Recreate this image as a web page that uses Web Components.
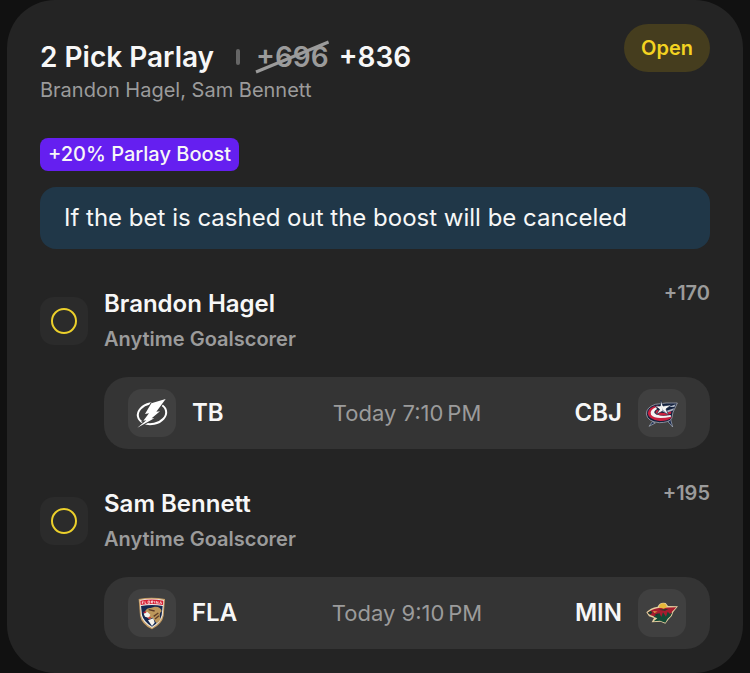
<!DOCTYPE html>
<html lang="en">
<head>
<meta charset="utf-8">
<meta name="viewport" content="width=device-width, initial-scale=1">
<title>2 Pick Parlay</title>
<style>
    body {
        margin: 0;
        background: #111;
        color: #f7f7f7;
        font-family: Inter, "Liberation Sans", sans-serif;
    }
</style>
</head>
<body>
<bet-card>
    <bet-header slot="header" was="+696" now="+836" status="Open">
        2 Pick Parlay
        <span slot="players">Brandon Hagel, Sam Bennett</span>
    </bet-header>
    <boost-badge slot="boost">+20% Parlay Boost</boost-badge>
    <bet-notice slot="boost">If the bet is cashed out the boost will be canceled</bet-notice>
    <bet-leg player="Brandon Hagel" market="Anytime Goalscorer" odds="+170">
        <game-bar away="TB" home="CBJ">Today 7:10&#8239;PM</game-bar>
    </bet-leg>
    <bet-leg player="Sam Bennett" market="Anytime Goalscorer" odds="+195">
        <game-bar away="FLA" home="MIN">Today 9:10&#8239;PM</game-bar>
    </bet-leg>
</bet-card>

<script>
const logos = {
    TB: `
        <ellipse cx="72" cy="74" rx="43" ry="31" transform="rotate(-12 72 74)" fill="none" stroke="#fff" stroke-width="6"/>
        <path d="M113 30 L70 43 L51 75 L63 73 L46 95 L55 94 L28 116 L79 88 L71 88 L96 67 L85 68 Z" fill="#fff" stroke="#404040" stroke-width="6" paint-order="stroke"/>`,
    CBJ: `
        <path d="M43 98 L33 112 L52 102 Z M90 98 L104 114 L98 91 Z" fill="#1c2c50" stroke="#a9b0bc" stroke-width="2"/>
        <path d="M118 42 Q84 40 52 46 Q25 55 25 75 Q28 98 64 101 Q91 101 101 89 L105 70 Z" fill="#14223f" stroke="#b9bdc7" stroke-width="2"/>
        <path d="M62 48 Q31 53 29 73 Q32 92 65 96 Q87 97 100 87 L99 80 Q70 88 50 80 Q39 72 50 63 Z" fill="#c9213f"/>
        <path d="M54 55 Q34 63 39 77 Q52 93 99 83 L98 78 Q63 84 50 73 Q46 67 57 60 Z" fill="#f3f3f3"/>
        <path d="M59 62 Q47 68 57 76 Q76 84 99 74 L100 67 Q76 76 65 69 Z" fill="#c9213f"/>
        <path d="M84 66 L108 58 L106 64 L84 72 Z M92 54 L113 46 L109 54 Z" fill="#aeb6c4"/>
        <path d="M69 33 L75 51 L101 47 L84 60 L91 77 L73 67 L55 76 L65 61 L51 51 L67 51 Z" fill="#f5f5f5" stroke="#14223f" stroke-width="2"/>
        <path d="M70 43 L73 61 L88 74 L73 66 Z" fill="#8795ad"/>`,
    FLA: `
        <path d="M32 30 Q70 22 111 30 L107 80 Q103 104 72 121 Q40 105 36 80 Z" fill="#c49c64"/>
        <path d="M35 33 Q71 25 108 33 L104 79 Q99 101 72 117 Q44 101 39 79 Z" fill="#f2eee5"/>
        <path d="M37 35 Q71 28 106 35 L105 48 Q72 42 38 48 Z" fill="#d51f34"/>
        <path d="M43 38 V45 M43 38 H47 M43 41 H46 M51 37 V44 H55 M60 36 H65 V43 H60 Z M70 43 V36 H75 V39 H70 L75 43 M80 36 V43 M85 44 V37 L90 44 V37 M95 45 L98 38 L101 45" fill="none" stroke="#fff" stroke-width="2"/>
        <path d="M39 51 Q72 45 104 51 L101 78 Q97 98 72 113 Q47 98 42 78 Z" fill="#142850"/>
        <path d="M52 65 Q57 55 68 57 L80 53 Q99 52 101 67 Q91 73 98 91 Q92 100 85 102 L74 86 L64 91 L50 78 Z" fill="#bd975b"/>
        <path d="M47 74 L58 69 L67 77 L62 86 L51 83 Z M60 94 L76 88 L80 101 L72 111 Z" fill="#f5f2eb"/>
        <path d="M62 62 L80 66 M77 82 L91 72 M81 90 L93 80" stroke="#5f3d2a" stroke-width="4"/>
        <path d="M44 70 L53 67 L54 73 Z M57 86 L69 84 L66 90 Z" fill="#d51f34"/>`,
    MIN: `
        <path d="M25 70 Q36 57 59 53 Q65 38 83 42 L90 51 L120 52 L106 69 Q104 81 92 91 L82 104 L68 98 L41 100 L48 87 L33 82 Z" fill="#e5cf9f"/>
        <path d="M29 71 Q42 59 66 56 L115 55 L102 68 Q101 79 86 88 L81 98 L64 87 L38 79 Z" fill="#a51d2f"/>
        <path d="M46 83 L64 72 L70 84 L75 70 L84 83 L89 68 L96 75 L103 70 Q100 82 89 89 L82 101 L66 95 L47 97 L58 88 Z" fill="#124a35"/>
        <path d="M63 55 Q65 42 77 43 Q86 45 86 55 L77 59 Z" fill="#e6b738"/>
        <path d="M29 71 L39 65 L43 71 L36 77 Z M61 62 L91 60 L81 65 Z M50 77 L61 73 L57 80 Z" fill="#193b2d"/>
        <path d="M45 67 L59 68 L49 71 Z" fill="#f0c94c"/>`
}

function define(name, markup, setup) {
    const template = document.createElement('template')
    template.innerHTML = markup
    customElements.define(name, class extends HTMLElement {
        constructor() {
            super()
            const shadow = this.attachShadow({mode: 'open'})
            shadow.appendChild(template.content.cloneNode(true))
            // every [data-text] node is filled from the attribute of that name
            shadow.querySelectorAll('[data-text]').forEach(node => {
                node.textContent = this.getAttribute(node.dataset.text)
            })
            if (setup) setup(this, shadow)
        }
    })
}

define('bet-card', `
    <style>
    :host {
        display: block;
        margin: 0 7px;
        padding: 24px 33px;
        border-radius: 48px;
        background: #242424;
    }
    .boost {
        display: flex;
        flex-direction: column;
        align-items: flex-start;
        gap: 16px;
        margin-top: 32px;
    }
    .legs {
        display: flex;
        flex-direction: column;
        gap: 32px;
        margin-top: 32px;
    }
    </style>
    <slot name="header"></slot>
    <div class="boost"><slot name="boost"></slot></div>
    <div class="legs"><slot></slot></div>
`)

define('bet-header', `
    <style>
    :host {
        display: flex;
        justify-content: space-between;
        align-items: flex-start;
    }
    .text {
        padding-top: 15px;
    }
    .title {
        display: flex;
        align-items: center;
        font-size: 28px;
        font-weight: 600;
        line-height: 36px;
    }
    h1 {
        margin: 0;
        font: inherit;
    }
    .divider {
        width: 4px;
        height: 16px;
        margin: 0 16px 0 22px;
        border-radius: 2px;
        background: #666;
    }
    s {
        position: relative;
        margin-right: 10px;
        color: #9b9b9b;
        text-decoration: none;
    }
    s svg {
        position: absolute;
        inset: 0;
        width: 100%;
        height: 100%;
        overflow: visible;
    }
    .players {
        color: #9b9b9b;
        font-size: 20px;
        line-height: 31px;
    }
    .status {
        padding: 0 17px;
        border-radius: 24px;
        background: #453d1e;
        color: #f3d321;
        font-size: 20px;
        font-weight: 600;
        line-height: 48px;
    }
    </style>
    <div class="text">
        <div class="title">
            <h1><slot></slot></h1>
            <span class="divider"></span>
            <s><span data-text="was"></span><svg viewBox="0 0 72 36" preserveAspectRatio="none" aria-hidden="true"><path d="M0 33 L72 3" stroke="#9b9b9b" stroke-width="3"/></svg></s>
            <span data-text="now"></span>
        </div>
        <div class="players"><slot name="players"></slot></div>
    </div>
    <span class="status" data-text="status"></span>
`)

define('boost-badge', `
    <style>
    :host {
        display: block;
        padding: 0 8px;
        border-radius: 8px;
        background: #651ff0;
        font-size: 20px;
        font-weight: 500;
        line-height: 33px;
    }
    </style>
    <slot></slot>
`)

define('bet-notice', `
    <style>
    :host {
        display: block;
        align-self: stretch;
        padding: 15px 24px;
        border-radius: 16px;
        background: #203748;
        font-size: 24px;
        line-height: 32px;
    }
    </style>
    <slot></slot>
`)

define('bet-leg', `
    <style>
    :host {
        display: flex;
        gap: 16px;
    }
    .mark {
        flex: none;
        width: 48px;
        height: 48px;
        margin-top: 16px;
        border-radius: 14px;
        background: #2b2b2b;
    }
    .body {
        flex: 1;
    }
    .top {
        display: flex;
        justify-content: space-between;
        margin-bottom: 24px;
    }
    h2 {
        margin: 7px 0 6px;
        font-size: 24px;
        font-weight: 600;
        line-height: 32px;
    }
    .market, .odds {
        color: #9b9b9b;
        font-size: 20px;
        font-weight: 600;
    }
    .market {
        line-height: 27px;
    }
    .odds {
        line-height: 24px;
    }
    </style>
    <svg class="mark" viewBox="0 0 48 48" aria-hidden="true"><circle cx="24" cy="24" r="12" fill="none" stroke="#ecd02b" stroke-width="2"/></svg>
    <div class="body">
        <div class="top">
            <div>
                <h2 data-text="player"></h2>
                <div class="market" data-text="market"></div>
            </div>
            <div class="odds" data-text="odds"></div>
        </div>
        <slot></slot>
    </div>
`)

define('game-bar', `
    <style>
    :host {
        display: grid;
        grid-template-columns: 1fr auto 1fr;
        align-items: center;
        padding: 12px 24px;
        border-radius: 24px;
        background: #343434;
        font-size: 24px;
        line-height: 32px;
    }
    .team {
        display: flex;
        align-items: center;
        gap: 16px;
        font-weight: 600;
    }
    .home {
        justify-content: flex-end;
    }
    .time {
        color: #9b9b9b;
        font-size: 22px;
    }
    </style>
    <div class="team"><team-logo></team-logo><span data-text="away"></span></div>
    <div class="time"><slot></slot></div>
    <div class="team home"><span data-text="home"></span><team-logo></team-logo></div>
`, (host, shadow) => {
    const [away, home] = shadow.querySelectorAll('team-logo')
    away.setAttribute('team', host.getAttribute('away'))
    home.setAttribute('team', host.getAttribute('home'))
})

class TeamLogo extends HTMLElement {
    static observedAttributes = ['team']

    constructor() {
        super()
        this.attachShadow({mode: 'open'}).innerHTML = `
            <style>
            :host {
                display: block;
                width: 48px;
                height: 48px;
                border-radius: 14px;
                background: #404040;
            }
            svg {
                display: block;
            }
            </style>
            <svg width="48" height="48" viewBox="0 0 144 144" aria-hidden="true"></svg>
        `
    }

    attributeChangedCallback(name, old, team) {
        this.shadowRoot.querySelector('svg').innerHTML = logos[team]
    }
}

customElements.define('team-logo', TeamLogo)
</script>
</body>
</html>
